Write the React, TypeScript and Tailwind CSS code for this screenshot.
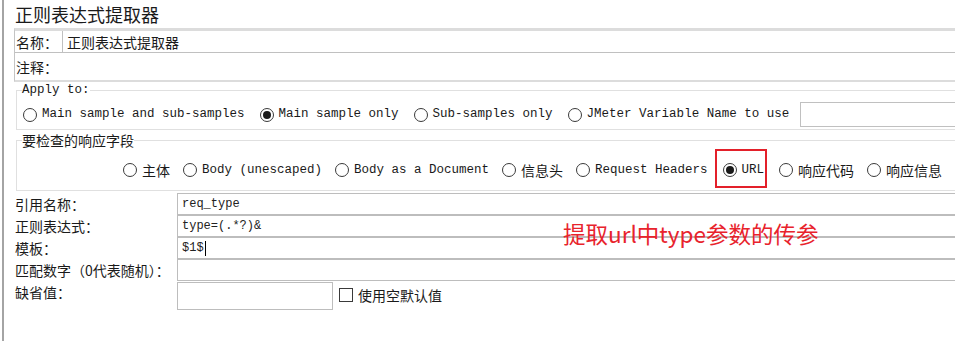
import React from "react";

const cjk = "font-['Noto_Sans_CJK_SC',sans-serif]";
const mono = "font-['Liberation_Mono','Noto_Sans_CJK_SC',monospace]";

function Radio({ checked }: { checked?: boolean }) {
  return (
    <span className="w-[14px] h-[14px] rounded-full border border-[#3a3a3a] bg-white flex items-center justify-center shrink-0">
      {checked && <span className="w-[8px] h-[8px] rounded-full bg-[#1a1a1a]" />}
    </span>
  );
}

function Option({ label, checked, zh }: { label: string; checked?: boolean; zh?: boolean }) {
  return (
    <span className="flex items-center gap-[5px] shrink-0 whitespace-nowrap">
      <Radio checked={checked} />
      <span className={zh ? `${cjk} text-[14px] leading-none` : `${mono} text-[12.5px] leading-none`}>{label}</span>
    </span>
  );
}

function Field({ label, value }: { label: string; value?: string }) {
  return (
    <div className="flex h-[22px] items-center">
      <span className={`w-[173px] shrink-0 pl-[11px] whitespace-nowrap ${cjk} text-[14px] leading-none`}>{label}</span>
      <div className={`h-[22px] w-[800px] shrink-0 border border-[#bdbdbd] bg-white px-[4px] flex items-center ${mono} text-[12px] text-[#222]`}>
        {value}
        {value === "$1$" && <span className="ml-[1px] w-px h-[15px] bg-black" />}
      </div>
    </div>
  );
}

export default function App() {
  return (
    <div className="w-[955px] h-[341px] bg-white overflow-hidden pl-[2px] text-[#1a1a1a]">
      <div className="relative h-full border-l-2 border-[#a4a4a4]">
        <div className={`h-[28px] pl-[11px] ${cjk} text-[18px] leading-[28px]`}>正则表达式提取器</div>

        {/* name / comments */}
        <div className="ml-[10px] w-[1000px] border-t-[3px] border-b-2 border-l border-t-[#dcdcdc] border-b-[#dcdcdc] border-l-[#c4c4c4]">
          <div className="flex h-[22px] border-b border-[#c0c0c0]">
            <span className={`w-[47px] pl-px flex items-center ${cjk} text-[14px] leading-none`}>名称：</span>
            <div className={`flex-1 border-l border-[#c0c0c0] pl-[4px] flex items-center ${cjk} text-[14px] leading-none`}>
              正则表达式提取器
            </div>
          </div>
          <div className={`h-[27px] pl-px flex items-center ${cjk} text-[14px] leading-none`}>注释：</div>
        </div>

        {/* apply to */}
        <fieldset className="ml-[12px] w-[1000px] border border-[#e0e0e0] mt-px">
          <legend className={`ml-[5px] ${mono} text-[12.5px] leading-[14px]`}>Apply to:</legend>
          <div className="flex items-center h-[25px] mt-[5px] mb-[2px] pl-[6px] gap-[15px]">
            <Option label="Main sample and sub-samples" />
            <Option label="Main sample only" checked />
            <Option label="Sub-samples only" />
            <Option label="JMeter Variable Name to use" />
            <div className="h-[25px] w-[300px] shrink-0 border border-[#c0c0c0] bg-white -ml-[4px]" />
          </div>
        </fieldset>

        {/* field to check */}
        <fieldset className="ml-[12px] w-[1000px] border border-[#e0e0e0] mt-[2px]">
          <legend className={`ml-[5px] ${cjk} text-[14px] leading-[16px]`}>要检查的响应字段</legend>
          <div className="flex items-center h-[22px] mt-[11px] mb-[9px] pl-[106px] gap-[13px]">
            <Option label="主体" zh />
            <Option label="Body (unescaped)" />
            <Option label="Body as a Document" />
            <Option label="信息头" zh />
            <Option label="Request Headers" />
            <span className="relative ml-[2px] shrink-0">
              <Option label="URL" checked />
              <span className="absolute -left-[8px] -right-[3px] -top-[14px] -bottom-[11px] border-2 border-[#e3202a]" />
            </span>
            <span className="ml-[2px] shrink-0">
              <Option label="响应代码" zh />
            </span>
            <Option label="响应信息" zh />
          </div>
        </fieldset>

        {/* regex fields */}
        <div className="mt-[2px] flex flex-col">
          <Field label="引用名称：" value="req_type" />
          <Field label="正则表达式：" value="type=(.*?)&" />
          <Field label="模板：" value="$1$" />
          <Field label="匹配数字（0代表随机）：" />
          <div className="flex items-start mt-px">
            <span className={`w-[173px] shrink-0 pl-[11px] pt-[2px] ${cjk} text-[14px] leading-[16px]`}>缺省值：</span>
            <div className="h-[28px] w-[156px] shrink-0 border border-[#bdbdbd] bg-white" />
            <label className="flex items-center gap-[5px] ml-[6px] mt-[6px] shrink-0">
              <span className="w-[14px] h-[14px] border border-[#3a3a3a] bg-white" />
              <span className={`${cjk} text-[14px] leading-none`}>使用空默认值</span>
            </label>
          </div>
        </div>

        <span className={`absolute left-[559px] top-[222px] ${cjk} text-[22.5px] leading-none text-[#e8232c]`}>
          提取url中type参数的传参
        </span>
      </div>
    </div>
  );
}
